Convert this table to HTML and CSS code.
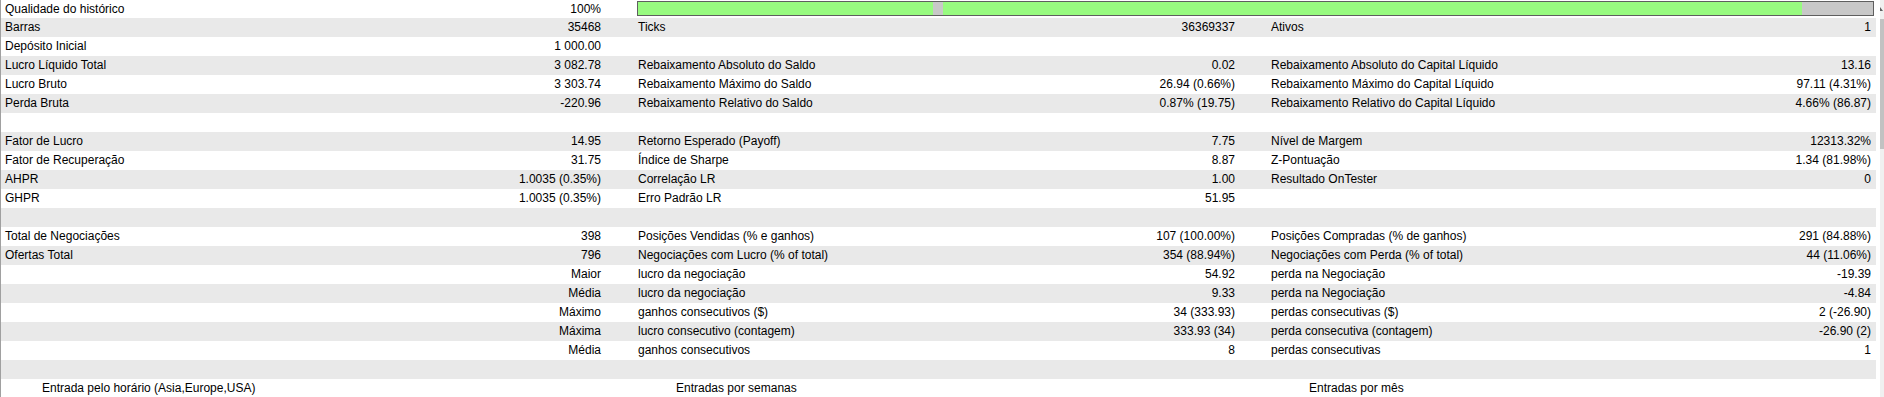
FILE: index.html
```html
<!DOCTYPE html>
<html lang="pt">
<head>
<meta charset="utf-8">
<title>Relatório</title>
<link rel="stylesheet" href="styles.css">
</head>
<body>
<div class="window">
  <div class="table">
    <div class="row first">
      <div class="cell a"><span>Qualidade do histórico</span><span>100%</span></div>
      <div class="bar-cell">
        <div class="bar">
          <div class="seg green w1"></div>
          <div class="seg gray w2"></div>
          <div class="seg green w3"></div>
          <div class="seg gray w4"></div>
        </div>
      </div>
    </div>
    <div class="row">
      <div class="cell a"><span>Barras</span><span>35468</span></div>
      <div class="cell b"><span>Ticks</span><span>36369337</span></div>
      <div class="cell c"><span>Ativos</span><span>1</span></div>
    </div>
    <div class="row">
      <div class="cell a"><span>Depósito Inicial</span><span>1 000.00</span></div>
      <div class="cell b"></div>
      <div class="cell c"></div>
    </div>
    <div class="row">
      <div class="cell a"><span>Lucro Líquido Total</span><span>3 082.78</span></div>
      <div class="cell b"><span>Rebaixamento Absoluto do Saldo</span><span>0.02</span></div>
      <div class="cell c"><span>Rebaixamento Absoluto do Capital Líquido</span><span>13.16</span></div>
    </div>
    <div class="row">
      <div class="cell a"><span>Lucro Bruto</span><span>3 303.74</span></div>
      <div class="cell b"><span>Rebaixamento Máximo do Saldo</span><span>26.94 (0.66%)</span></div>
      <div class="cell c"><span>Rebaixamento Máximo do Capital Líquido</span><span>97.11 (4.31%)</span></div>
    </div>
    <div class="row">
      <div class="cell a"><span>Perda Bruta</span><span>-220.96</span></div>
      <div class="cell b"><span>Rebaixamento Relativo do Saldo</span><span>0.87% (19.75)</span></div>
      <div class="cell c"><span>Rebaixamento Relativo do Capital Líquido</span><span>4.66% (86.87)</span></div>
    </div>
    <div class="row">
      <div class="cell a"></div><div class="cell b"></div><div class="cell c"></div>
    </div>
    <div class="row">
      <div class="cell a"><span>Fator de Lucro</span><span>14.95</span></div>
      <div class="cell b"><span>Retorno Esperado (Payoff)</span><span>7.75</span></div>
      <div class="cell c"><span>Nível de Margem</span><span>12313.32%</span></div>
    </div>
    <div class="row">
      <div class="cell a"><span>Fator de Recuperação</span><span>31.75</span></div>
      <div class="cell b"><span>Índice de Sharpe</span><span>8.87</span></div>
      <div class="cell c"><span>Z-Pontuação</span><span>1.34 (81.98%)</span></div>
    </div>
    <div class="row">
      <div class="cell a"><span>AHPR</span><span>1.0035 (0.35%)</span></div>
      <div class="cell b"><span>Correlação LR</span><span>1.00</span></div>
      <div class="cell c"><span>Resultado OnTester</span><span>0</span></div>
    </div>
    <div class="row">
      <div class="cell a"><span>GHPR</span><span>1.0035 (0.35%)</span></div>
      <div class="cell b"><span>Erro Padrão LR</span><span>51.95</span></div>
      <div class="cell c"></div>
    </div>
    <div class="row">
      <div class="cell a"></div><div class="cell b"></div><div class="cell c"></div>
    </div>
    <div class="row">
      <div class="cell a"><span>Total de Negociações</span><span>398</span></div>
      <div class="cell b"><span>Posições Vendidas (% e ganhos)</span><span>107 (100.00%)</span></div>
      <div class="cell c"><span>Posições Compradas (% de ganhos)</span><span>291 (84.88%)</span></div>
    </div>
    <div class="row">
      <div class="cell a"><span>Ofertas Total</span><span>796</span></div>
      <div class="cell b"><span>Negociações com Lucro (% of total)</span><span>354 (88.94%)</span></div>
      <div class="cell c"><span>Negociações com Perda (% of total)</span><span>44 (11.06%)</span></div>
    </div>
    <div class="row">
      <div class="cell a"><span></span><span>Maior</span></div>
      <div class="cell b"><span>lucro da negociação</span><span>54.92</span></div>
      <div class="cell c"><span>perda na Negociação</span><span>-19.39</span></div>
    </div>
    <div class="row">
      <div class="cell a"><span></span><span>Média</span></div>
      <div class="cell b"><span>lucro da negociação</span><span>9.33</span></div>
      <div class="cell c"><span>perda na Negociação</span><span>-4.84</span></div>
    </div>
    <div class="row">
      <div class="cell a"><span></span><span>Máximo</span></div>
      <div class="cell b"><span>ganhos consecutivos ($)</span><span>34 (333.93)</span></div>
      <div class="cell c"><span>perdas consecutivas ($)</span><span>2 (-26.90)</span></div>
    </div>
    <div class="row">
      <div class="cell a"><span></span><span>Máxima</span></div>
      <div class="cell b"><span>lucro consecutivo (contagem)</span><span>333.93 (34)</span></div>
      <div class="cell c"><span>perda consecutiva (contagem)</span><span>-26.90 (2)</span></div>
    </div>
    <div class="row">
      <div class="cell a"><span></span><span>Média</span></div>
      <div class="cell b"><span>ganhos consecutivos</span><span>8</span></div>
      <div class="cell c"><span>perdas consecutivas</span><span>1</span></div>
    </div>
    <div class="row">
      <div class="cell a"></div><div class="cell b"></div><div class="cell c"></div>
    </div>
    <div class="row section">
      <div class="cell a"><span>Entrada pelo horário (Asia,Europe,USA)</span></div>
      <div class="cell b"><span>Entradas por semanas</span></div>
      <div class="cell c"><span>Entradas por mês</span></div>
    </div>
  </div>
  <div class="scrollbar">
    <div class="arrow"></div>
    <div class="thumb"></div>
  </div>
</div>
</body>
</html>
```

FILE: styles.css
```css
html, body {
  margin: 0;
  padding: 0;
  background: #ffffff;
}

body {
  width: 1884px;
  height: 397px;
  overflow: hidden;
  font-family: "Liberation Sans", Arial, sans-serif;
  font-size: 12px;
  color: #000000;
}

.window {
  display: flex;
  height: 397px;
  border-left: 1px solid #a0a0a0;
  box-sizing: border-box;
}

.table {
  width: 1875px;
  flex: none;
}

.row {
  display: grid;
  grid-template-columns: 619px 633px 623px;
  height: 19px;
  line-height: 19px;
  white-space: nowrap;
}

.row:nth-child(even) {
  background: #e9e9e9;
}

.row.first {
  height: 18px;
  line-height: 18px;
}

.cell {
  display: flex;
  justify-content: space-between;
  overflow: hidden;
}

.cell.a {
  padding: 0 19px 0 4px;
}

.cell.b {
  padding: 0 18px 0 18px;
}

.cell.c {
  padding: 0 5px 0 18px;
}

.row.section .cell.a {
  padding-left: 41px;
}

.row.section .cell.b,
.row.section .cell.c {
  padding-left: 56px;
}

.bar-cell {
  grid-column: 2 / 4;
  padding: 1px 2px 2px 17px;
}

.bar {
  display: flex;
  height: 15px;
  border: 1px solid #5f5f5f;
  box-sizing: border-box;
}

.seg.green {
  background: #98fb80;
}

.seg.gray {
  background: #c8c8c8;
}

.w1 { width: 295px; }
.w2 { width: 10px; }
.w3 { width: 859px; }
.w4 { flex: 1; }

.scrollbar {
  width: 4px;
  margin-left: 4px;
  background: #f0f0f0;
  display: flex;
  flex-direction: column;
}

.arrow {
  height: 17px;
  position: relative;
}

.arrow::before {
  content: "";
  position: absolute;
  left: 0;
  top: 7px;
  width: 0;
  height: 0;
  border-right: 3px solid transparent;
  border-bottom: 4px solid #606060;
}

.thumb {
  margin-top: 2px;
  height: 130px;
  background: #c2c2c2;
}
```
